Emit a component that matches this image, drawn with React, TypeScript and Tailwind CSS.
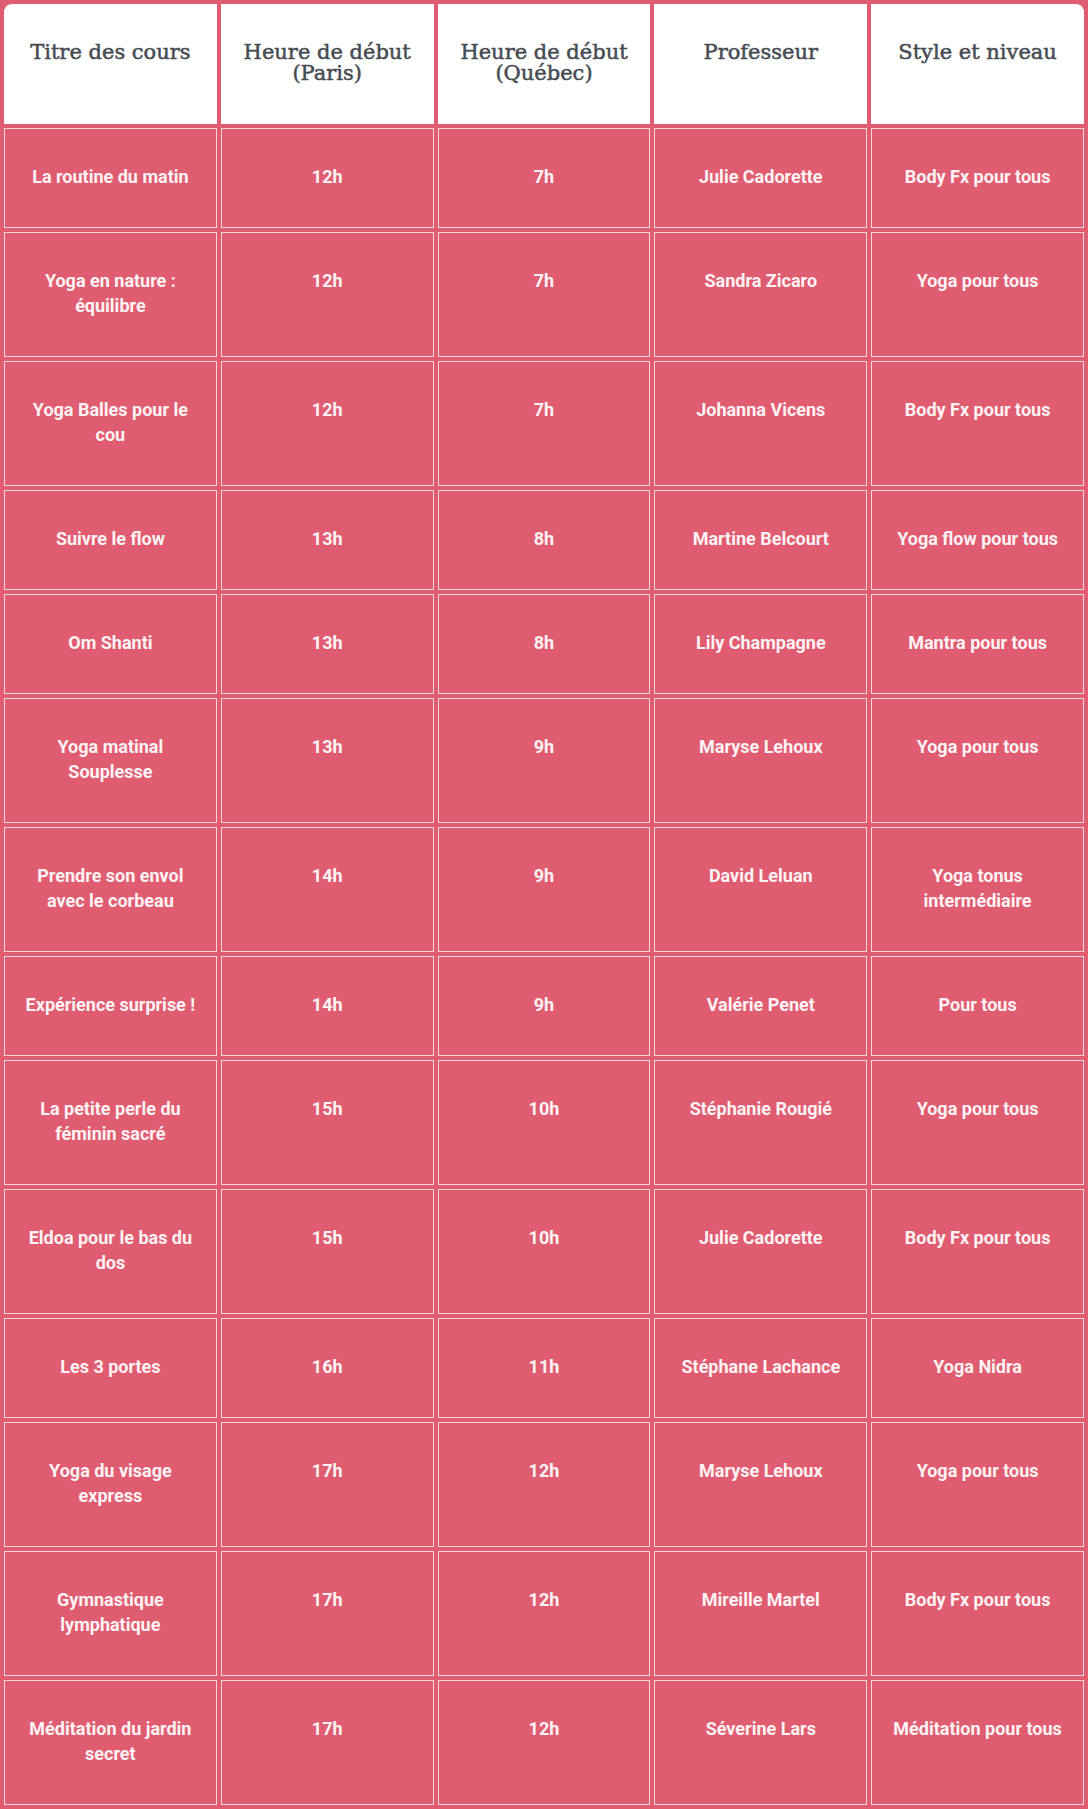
const headers = [
  ['Titre des cours'],
  ['Heure de début', '(Paris)'],
  ['Heure de début', '(Québec)'],
  ['Professeur'],
  ['Style et niveau'],
];

const rows: string[][] = [
  ['La routine du matin', '12h', '7h', 'Julie Cadorette', 'Body Fx pour tous'],
  ['Yoga en nature : équilibre', '12h', '7h', 'Sandra Zicaro', 'Yoga pour tous'],
  ['Yoga Balles pour le cou', '12h', '7h', 'Johanna Vicens', 'Body Fx pour tous'],
  ['Suivre le flow', '13h', '8h', 'Martine Belcourt', 'Yoga flow pour tous'],
  ['Om Shanti', '13h', '8h', 'Lily Champagne', 'Mantra pour tous'],
  ['Yoga matinal Souplesse', '13h', '9h', 'Maryse Lehoux', 'Yoga pour tous'],
  ['Prendre son envol avec le corbeau', '14h', '9h', 'David Leluan', 'Yoga tonus intermédiaire'],
  ['Expérience surprise !', '14h', '9h', 'Valérie Penet', 'Pour tous'],
  ['La petite perle du féminin sacré', '15h', '10h', 'Stéphanie Rougié', 'Yoga pour tous'],
  ['Eldoa pour le bas du dos', '15h', '10h', 'Julie Cadorette', 'Body Fx pour tous'],
  ['Les 3 portes', '16h', '11h', 'Stéphane Lachance', 'Yoga Nidra'],
  ['Yoga du visage express', '17h', '12h', 'Maryse Lehoux', 'Yoga pour tous'],
  ['Gymnastique lymphatique', '17h', '12h', 'Mireille Martel', 'Body Fx pour tous'],
  ['Méditation du jardin secret', '17h', '12h', 'Séverine Lars', 'Méditation pour tous'],
];

export default function App() {
  return (
    <div className="w-[1088px] bg-[#e05c70]">
      <table className="w-full table-fixed border-separate border-spacing-[4px]">
        <thead>
          <tr>
            {headers.map((lines, i) => (
              <th
                key={i}
                className={
                  'h-[120px] bg-white px-3 pt-[38px] align-top text-center text-[21px] font-normal leading-[21px] text-[#464b52] [-webkit-text-stroke:0.5px_#464b52] font-["DejaVu_Serif",serif] ' +
                  (i === 0 ? 'rounded-tl-[8px]' : i === headers.length - 1 ? 'rounded-tr-[8px]' : '')
                }
              >
                {lines.map((l) => (
                  <div key={l}>{l}</div>
                ))}
              </th>
            ))}
          </tr>
        </thead>
        <tbody>
          {rows.map((row, r) => (
            <tr key={r}>
              {row.map((cell, c) => (
                <td
                  key={c}
                  className="border border-[#f9d4da] px-5 pt-[35px] pb-[38px] align-top text-center text-[18px] font-bold leading-[25px] text-[#fff3f5] font-['Roboto',sans-serif]"
                >
                  {cell}
                </td>
              ))}
            </tr>
          ))}
        </tbody>
      </table>
    </div>
  );
}
